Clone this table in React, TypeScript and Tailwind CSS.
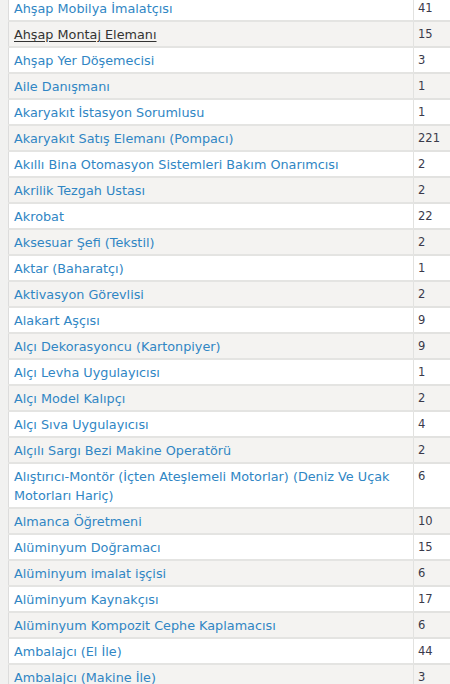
import React from 'react';

const jobs: [string, number][] = [
  ['Ahşap Mobilya İmalatçısı', 41],
  ['Ahşap Montaj Elemanı', 15],
  ['Ahşap Yer Döşemecisi', 3],
  ['Aile Danışmanı', 1],
  ['Akaryakıt İstasyon Sorumlusu', 1],
  ['Akaryakıt Satış Elemanı (Pompacı)', 221],
  ['Akıllı Bina Otomasyon Sistemleri Bakım Onarımcısı', 2],
  ['Akrilik Tezgah Ustası', 2],
  ['Akrobat', 22],
  ['Aksesuar Şefi (Tekstil)', 2],
  ['Aktar (Baharatçı)', 1],
  ['Aktivasyon Görevlisi', 2],
  ['Alakart Aşçısı', 9],
  ['Alçı Dekorasyoncu (Kartonpiyer)', 9],
  ['Alçı Levha Uygulayıcısı', 1],
  ['Alçı Model Kalıpçı', 2],
  ['Alçı Sıva Uygulayıcısı', 4],
  ['Alçılı Sargı Bezi Makine Operatörü', 2],
  ['Alıştırıcı-Montör (İçten Ateşlemeli Motorlar) (Deniz Ve Uçak Motorları Hariç)', 6],
  ['Almanca Öğretmeni', 10],
  ['Alüminyum Doğramacı', 15],
  ['Alüminyum imalat işçisi', 6],
  ['Alüminyum Kaynakçısı', 17],
  ['Alüminyum Kompozit Cephe Kaplamacısı', 6],
  ['Ambalajcı (El İle)', 44],
  ['Ambalajcı (Makine İle)', 3],
];

export default function App() {
  return (
    <div className="h-[684px] w-[450px] overflow-hidden bg-[#f1f1f0] pl-2 font-['DejaVu_Sans',Verdana,sans-serif]">
      <table className="-mt-[4px] w-[480px] table-fixed border-collapse border-l border-[#dcdcdc]">
        <colgroup>
          <col className="w-[405px]" />
          <col />
        </colgroup>
        <tbody>
          {jobs.map(([name, count], i) => (
            <tr key={name} className={i % 2 === 0 ? 'bg-white' : 'bg-[#f4f3f1]'}>
              <td className="border-b-2 border-[#e4e4e2] px-[5px] pt-[3px] pb-[2px] align-top text-[12.8px] leading-[19px]">
                <a
                  href="#"
                  className={
                    i === 1
                      ? 'text-[#333] underline underline-offset-2'
                      : 'text-[#3086c4] no-underline'
                  }
                >
                  {name}
                </a>
              </td>
              <td className="border-b-2 border-l border-[#e2e2e0] px-[4px] pt-[3px] pb-[2px] align-top text-[11.5px] leading-[19px] text-[#3a3a4a]">
                {count}
              </td>
            </tr>
          ))}
        </tbody>
      </table>
    </div>
  );
}
